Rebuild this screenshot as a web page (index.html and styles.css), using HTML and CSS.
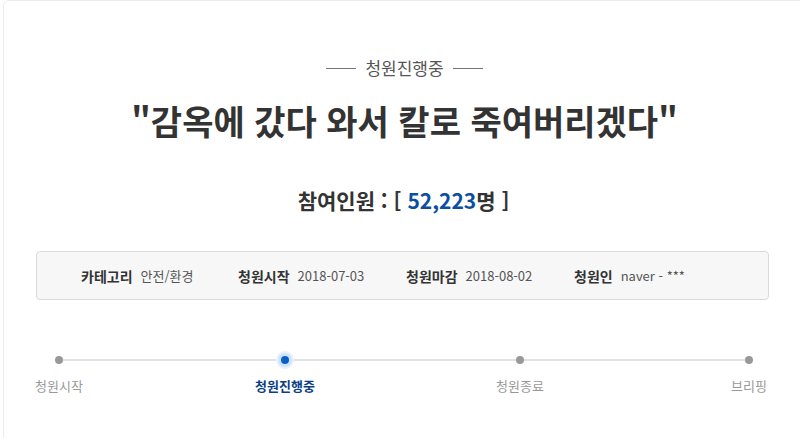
FILE: index.html
```html
<!DOCTYPE html>
<html lang="ko">
  <head>
    <meta charset="UTF-8" />
    <meta name="viewport" content="width=device-width, initial-scale=1.0" />
    <title>청원진행중</title>
    <link rel="stylesheet" href="styles.css">
  </head>
  <body>
    <div class="petition">
      <div class="status"><span>청원진행중</span></div>
      <h1 class="title">"감옥에 갔다 와서 칼로 죽여버리겠다"</h1>
      <p class="count">참여인원 : [ <span class="num">52,223</span>명 ]</p>
      <ul class="info">
        <li><b>카테고리</b>안전/환경</li>
        <li><b>청원시작</b>2018-07-03</li>
        <li><b>청원마감</b>2018-08-02</li>
        <li><b>청원인</b>naver - ***</li>
      </ul>
      <ol class="steps">
        <li>청원시작</li>
        <li class="on">청원진행중</li>
        <li>청원종료</li>
        <li>브리핑</li>
      </ol>
    </div>
  </body>
</html>
```

FILE: styles.css
```css
body {
  margin: 0;
  font-family: "Noto Sans CJK KR", "Noto Sans", sans-serif;
  color: #333;
  background: #fff;
  overflow: hidden;
  height: 438px;
}
.petition {
  margin-left: 3px;
  width: 830px;
  height: 460px;
  border: 1px solid #ececec;
  border-radius: 6px;
  box-sizing: border-box;
  padding-top: 54px;
}
.status {
  display: flex;
  justify-content: center;
  align-items: center;
  width: 801px;
  gap: 9px;
  font-size: 17px;
  color: #555;
  line-height: 26px;
}
.status::before,
.status::after {
  content: "";
  width: 30px;
  height: 1px;
  background: #777;
}
.title {
  width: 801px;
  margin: 15px 0 0;
  text-align: center;
  font-size: 34px;
  line-height: 50px;
  font-weight: bold;
  color: #333;
}
.count {
  width: 799px;
  margin: 39px 0 0;
  text-align: center;
  font-size: 21px;
  line-height: 30px;
  font-weight: bold;
  color: #333;
}
.count .num {
  color: #0b4ea2;
}
.info {
  list-style: none;
  display: flex;
  margin: 36px 0 0 32px;
  padding: 0 0 0 44px;
  width: 733px;
  height: 49px;
  box-sizing: border-box;
  align-items: center;
  background: #f7f7f7;
  border: 1px solid #dadada;
  border-radius: 4px;
  font-size: 13px;
  color: #555;
}
.info li {
  display: flex;
  gap: 8px;
}
.info li:nth-child(1) { width: 157px; }
.info li:nth-child(2) { width: 168px; }
.info li:nth-child(3) { width: 168px; }
.info b {
  color: #333;
  font-size: 14px;
}
.steps {
  list-style: none;
  display: grid;
  grid-template-columns: 226px 235px 229px 0;
  margin: 51px 0 0 55px;
  padding: 0;
  width: 690px;
  position: relative;
  font-size: 13px;
  color: #999;
}
.steps::before {
  content: "";
  position: absolute;
  left: 0;
  right: 0;
  top: 8px;
  height: 2px;
  background: #e2e2e2;
}
.steps li {
  position: relative;
  width: 0;
  display: flex;
  flex-direction: column;
  align-items: center;
  gap: 12px;
  line-height: 20px;
  white-space: nowrap;
}
.steps li::before {
  content: "";
  width: 8px;
  height: 8px;
  margin-top: 5px;
  border-radius: 50%;
  background: #999;
  position: relative;
}
.steps li.on {
  color: #0b3f87;
  font-weight: bold;
}
.steps li.on::before {
  background: #0a60c6;
  box-shadow: 0 0 0 3px #cfe3fa, 0 0 0 5px #eaf3fd;
}
```
